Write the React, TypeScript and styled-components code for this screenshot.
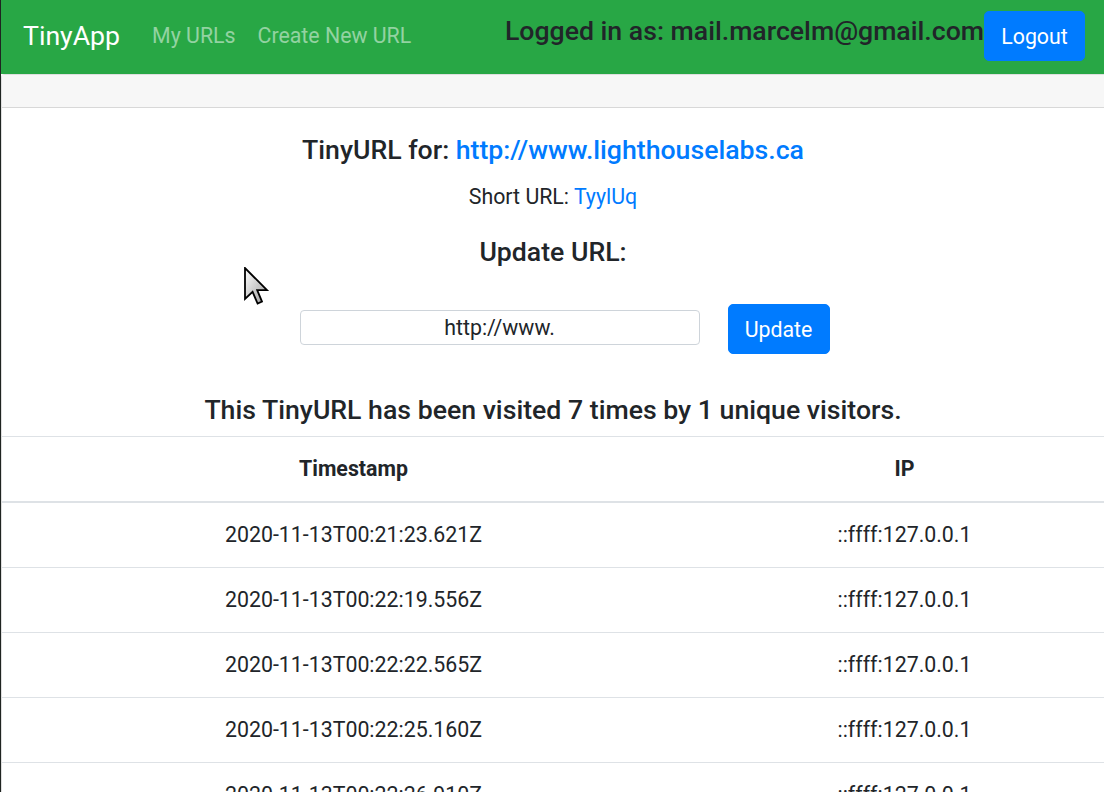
import React from "react";
import styled, { createGlobalStyle } from "styled-components";

const GlobalStyle = createGlobalStyle`
	html, body {
		margin: 0;
		padding: 0;
		overflow: hidden;
		background: #fff;
	}
	body {
		font-family: Roboto, "Liberation Sans", sans-serif;
		color: #212529;
		font-size: 21.33px;
		line-height: 1.5;
	}
`;

const Page = styled.div`
	position: relative;
	min-height: 792px;
	border-left: 1px solid #1f2421;
`;

const Navbar = styled.nav`
	display: flex;
	align-items: center;
	height: 74px;
	padding: 0 19px 2px 22px;
	background: #28a745;
	box-sizing: border-box;
`;

const Brand = styled.a`
	font-size: 26.67px;
	color: #fff;
	margin-right: 21px;
	text-decoration: none;
	line-height: 1;
`;

const NavLink = styled.a`
	font-size: 21.33px;
	color: rgba(255, 255, 255, 0.5);
	padding: 0 11px;
	text-decoration: none;
`;

const UserArea = styled.div`
	margin-left: auto;
	display: flex;
	align-items: center;
`;

const UserText = styled.span`
	font-size: 26.67px;
	font-weight: 500;
	color: #212529;
	line-height: 1.2;
	margin-top: -10px;
`;

const Button = styled.button<{ $w: number }>`
	width: ${(p) => p.$w}px;
	height: 50px;
	background: #007bff;
	color: #fff;
	border: 1px solid #007bff;
	border-radius: 5px;
	font-family: inherit;
	font-size: 21.33px;
	padding: 0;
`;

const Card = styled.div`
	border: 1px solid rgba(0, 0, 0, 0.125);
	border-right: none;
	border-bottom: none;
	border-radius: 4px 0 0 0;
`;

const CardHeader = styled.div`
	height: 32px;
	background: #f7f7f7;
	border-bottom: 1px solid rgba(0, 0, 0, 0.125);
`;

const CardBody = styled.div`
	display: flex;
	flex-direction: column;
	align-items: center;
	padding-top: 26px;
	padding-bottom: 10px;
`;

const Heading = styled.h5<{ $mb: number }>`
	margin: 0 0 ${(p) => p.$mb}px;
	font-size: 26.67px;
	font-weight: 500;
	line-height: 32px;
`;

const Text = styled.p`
	margin: 0 0 23px;
	line-height: 32px;
`;

const Link = styled.a`
	color: #007bff;
	text-decoration: none;
`;

const UpdateForm = styled.form`
	display: flex;
	align-items: flex-start;
	gap: 28px;
	margin: 0 0 40px;
	padding-left: 23px;
`;

const UrlInput = styled.input`
	width: 400px;
	height: 35px;
	margin-top: 6px;
	box-sizing: border-box;
	border: 1px solid #ced4da;
	border-radius: 4px;
	text-align: center;
	font-family: inherit;
	font-size: 21.33px;
	color: #212529;
	padding: 0;
`;

const Table = styled.table`
	width: 100%;
	border-collapse: collapse;
	text-align: center;
`;

const Th = styled.th<{ $w?: number }>`
	width: ${(p) => (p.$w ? `${p.$w}px` : "auto")};
	padding: 16px 0;
	font-weight: 700;
	border-top: 1px solid #dee2e6;
	border-bottom: 2px solid #dee2e6;
	line-height: 32px;
`;

const Td = styled.td`
	padding: 16px 0;
	border-top: 1px solid #dee2e6;
	line-height: 32px;
`;

const Cursor = styled.svg`
	position: absolute;
	left: 243px;
	top: 267px;
`;

const visits = [
	"2020-11-13T00:21:23.621Z",
	"2020-11-13T00:22:19.556Z",
	"2020-11-13T00:22:22.565Z",
	"2020-11-13T00:22:25.160Z",
	"2020-11-13T00:22:26.910Z",
	"2020-11-13T00:22:28.304Z",
	"2020-11-13T00:22:30.117Z",
];

export default function App() {
	return (
		<Page>
			<GlobalStyle />
			<Navbar>
				<Brand>TinyApp</Brand>
				<NavLink>My URLs</NavLink>
				<NavLink>Create New URL</NavLink>
				<UserArea>
					<UserText>Logged in as: mail.marcelm@gmail.com</UserText>
					<Button $w={101}>Logout</Button>
				</UserArea>
			</Navbar>
			<Card>
				<CardHeader />
				<CardBody>
					<Heading $mb={15}>
						TinyURL for: <Link>http://www.lighthouselabs.ca</Link>
					</Heading>
					<Text>
						Short URL: <Link>TyylUq</Link>
					</Text>
					<Heading $mb={36}>Update URL:</Heading>
					<UpdateForm>
						<UrlInput defaultValue="http://www." />
						<Button $w={102} type="button">Update</Button>
					</UpdateForm>
					<Heading $mb={0}>
						This TinyURL has been visited 7 times by 1 unique visitors.
					</Heading>
				</CardBody>
				<Table>
					<thead>
						<tr>
							<Th $w={703}>Timestamp</Th>
							<Th>IP</Th>
						</tr>
					</thead>
					<tbody>
						{visits.map((t) => (
							<tr key={t}>
								<Td>{t}</Td>
								<Td>::ffff:127.0.0.1</Td>
							</tr>
						))}
					</tbody>
				</Table>
			</Card>
			<Cursor width="26" height="40" viewBox="0 0 13 20">
				<defs>
					<linearGradient id="cg" x1="0" y1="0" x2="1" y2="1">
						<stop offset="0" stopColor="#ffffff" />
						<stop offset="1" stopColor="#9a9a9a" />
					</linearGradient>
				</defs>
				<path
					d="M0.5 0.5 L0.5 16 L4.3 12.4 L6.8 18.3 L9 17.3 L6.6 11.6 L11.5 11.6 Z"
					fill="url(#cg)"
					stroke="#000"
					strokeWidth="0.9"
					strokeLinejoin="miter"
				/>
			</Cursor>
		</Page>
	);
}
